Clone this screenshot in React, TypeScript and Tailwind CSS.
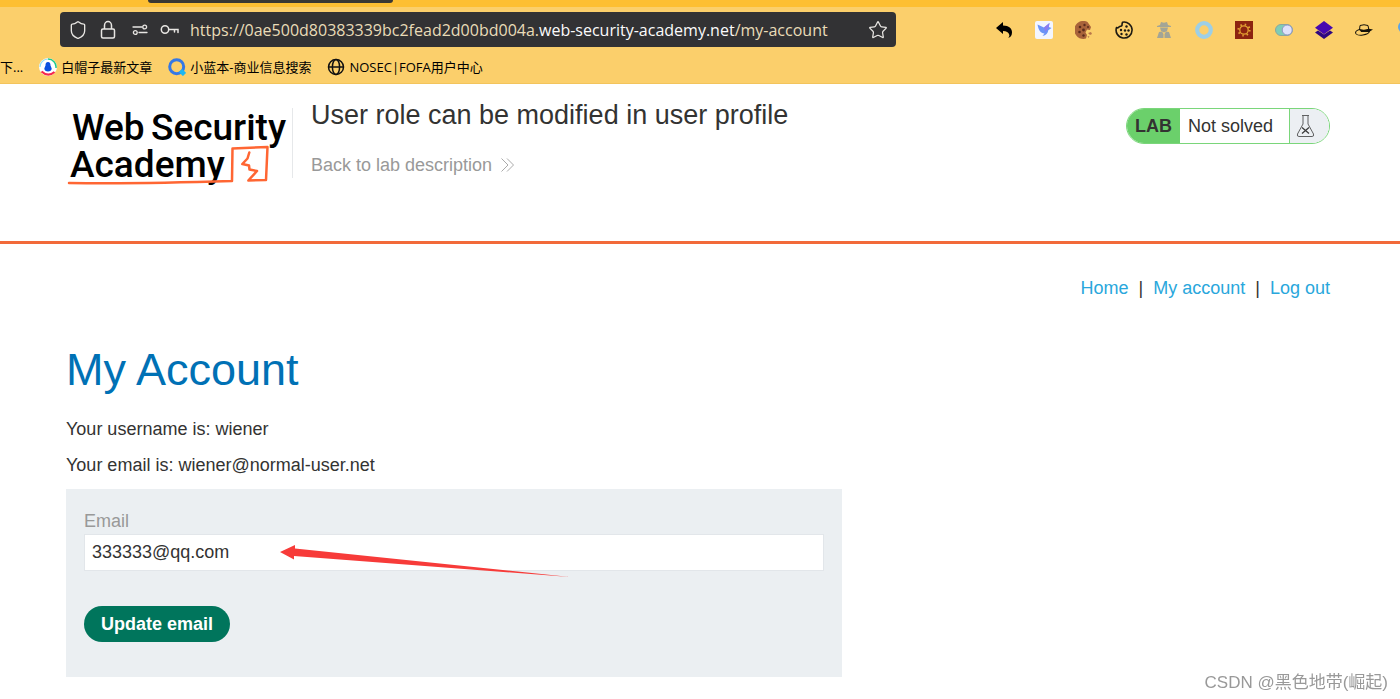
import React from 'react';
import { Star, Shield } from 'lucide-react';

const UI_FONT = "font-['Open_Sans','Noto_Sans_CJK_SC',sans-serif]";

const LockIcon = () => (
  <svg viewBox="0 0 16 20" className="h-5 w-4" fill="none" stroke="#e8e6e3" strokeWidth="1.500">
    <rect x="1.500" y="9" width="13" height="9" rx="1.500" />
    <path d="M4.500 9V5.500a3.500 4 0 0 1 7 0V9" />
  </svg>
);

const PermissionsIcon = () => (
  <svg viewBox="0 0 16 16" className="size-4" fill="none" stroke="#e8e6e3" strokeWidth="1.300" strokeLinecap="round">
    <path d="M1 5h9M7 10.500h8" />
    <circle cx="12.700" cy="5" r="1.900" />
    <circle cx="3.300" cy="10.500" r="1.900" />
  </svg>
);

const KeyIcon = () => (
  <svg viewBox="0 0 20 16" className="h-4 w-5" fill="none" stroke="#e8e6e3" strokeWidth="1.500" strokeLinecap="round">
    <circle cx="5" cy="7.500" r="3.700" />
    <path d="M9 7.500h9v3M14.500 7.500v2.500" />
  </svg>
);

const PaopaoIcon = () => (
  <svg viewBox="0 0 18 18" className="size-[18px]">
    <circle cx="9" cy="9" r="9" fill="#fff" />
    <path d="M9 1A8 8 0 0 1 17 10" fill="none" stroke="#20c98a" strokeWidth="1.500" />
    <path d="M1 9A8 8 0 0 1 9 1" fill="none" stroke="#8fdcf7" strokeWidth="1.200" />
    <path d="M2.500 13.500Q9 19.500 15.500 14" fill="none" stroke="#f5274f" strokeWidth="2.200" />
    <path d="M9 4c1.900 0 2.500 1.500 2.500 3.500l1.200 3c0 2-1.700 3-3.700 3s-3.700-1-3.700-3l1.200-3C6.500 5.500 7.100 4 9 4z" fill="#0b4fe0" />
  </svg>
);

const SearchQIcon = () => (
  <svg viewBox="0 0 18 18" className="size-[18px]">
    <circle cx="8.700" cy="8.700" r="7" fill="none" stroke="#3578e5" strokeWidth="3" />
    <path d="M12.500 12.500l4 4" stroke="#1bb8f2" strokeWidth="4.500" />
  </svg>
);

const GlobeIcon = () => (
  <svg viewBox="0 0 18 18" className="size-[18px]" fill="none" stroke="#111" strokeWidth="1.500">
    <circle cx="9" cy="9" r="7.500" />
    <ellipse cx="9" cy="9" rx="3.600" ry="7.500" />
    <path d="M1.500 9h15" />
  </svg>
);

const extensions = [
  {
    name: 'Undo',
    icon: (
      <path d="M1 7L8 1v3.500c6 0 9 3 9 7 0 3-1.500 5-4 5.500 1.200-1 1.700-2.200 1.200-3.500C13.500 11.500 11.500 10 8 10v3z" fill="#000" />
    ),
  },
  {
    name: 'Bird',
    icon: (
      <>
        <rect width="18" height="18" rx="2" fill="#f3f6ff" />
        <path d="M2.500 3.500l6.500 3L14.500 2l-.7 4L16.500 7l-3.200 2.200c-.3 3-2.300 5-5.800 5.800l2-2.500C5.500 12 3.500 9 2.500 3.500z" fill="#6b94f7" />
        <path d="M9 6.500L14.500 2l-.7 4-3.300 5z" fill="#8d7cf0" />
      </>
    ),
  },
  {
    name: 'Cookie editor',
    icon: (
      <>
        <path d="M12.500 1A9 9 0 1 0 11 17.500L12 14l-1.500-2.500 1.500-3 3 .5 1-3z" fill="#a9633a" />
        <g fill="#5a2c1c">
          <circle cx="5" cy="6" r="1.300" />
          <circle cx="9.500" cy="4" r="1.200" />
          <circle cx="4.500" cy="11" r="1.300" />
          <circle cx="8.500" cy="9" r="1.400" />
          <circle cx="8.500" cy="14.500" r="1.200" />
          <circle cx="13" cy="6" r="1" />
        </g>
        <path d="M13 12l3-1 1 2-2 1zM12.500 15l2 .5-1 1.500z" fill="#b9774a" />
      </>
    ),
  },
  {
    name: 'Cookies',
    icon: (
      <>
        <path d="M7.500 1.200A8 8 0 1 1 1.500 6.500Q3 7.500 4.500 5.500 7.500 5.500 7 3.200z" fill="none" stroke="#1d1a12" strokeWidth="1.600" strokeLinejoin="round" />
        <g fill="#1d1a12">
          <circle cx="6" cy="9" r="1.200" />
          <circle cx="11.500" cy="5.500" r="1.200" />
          <circle cx="10" cy="9.500" r="1.200" />
          <circle cx="6.500" cy="13" r="1.200" />
          <circle cx="13.500" cy="9.500" r="1.200" />
          <circle cx="11.500" cy="13.500" r="1.200" />
        </g>
      </>
    ),
  },
  {
    name: 'Spy',
    icon: (
      <g fill="#a3a596">
        <path d="M6 1l3 .8L12 1l1 3 3 1v1H2V5l3-1z" />
        <path d="M5 6.500h8L12 10l-3 1.500L6 10z" />
        <path d="M4 11l3-.5 1.500 2.500V17H2zM14 11l-3-.5L9.500 13V17H16z" />
      </g>
    ),
  },
  { name: 'Ring', icon: <circle cx="9" cy="9" r="6.800" fill="none" stroke="#9dcfe6" strokeWidth="4.200" /> },
  {
    name: 'Gear',
    icon: (
      <>
        <rect width="18" height="18" fill="#8d2410" />
        <circle cx="9" cy="9" r="4.200" fill="none" stroke="#e3a032" strokeWidth="1.300" />
        <circle cx="9" cy="9" r="5.600" fill="none" stroke="#e3a032" strokeWidth="2" strokeDasharray="1.500 2.900" />
      </>
    ),
  },
  {
    name: 'Proxy switch',
    icon: (
      <>
        <rect x=".5" y="3.500" width="17" height="11" rx="5.500" fill="#7fcdb6" stroke="#8aa79f" />
        <circle cx="12.200" cy="9" r="5" fill="#dfe2fb" stroke="#9296c4" />
      </>
    ),
  },
  {
    name: 'Layers',
    icon: (
      <>
        <path d="M0 11.500l3-2 6 4 6-4 3 2L9 18z" fill="#2f0880" />
        <path d="M9 0l9 6.800-9 6.500L0 6.800z" fill="#4608b0" />
      </>
    ),
  },
  {
    name: 'Hat',
    icon: (
      <>
        <ellipse cx="7.500" cy="11" rx="7" ry="3" transform="rotate(-8 7.500 11)" fill="none" stroke="#14110a" strokeWidth="1.100" />
        <path d="M4.500 9L5 4.500q4-1.500 8 0l.8 4q-4.500 2-9.300.5z" fill="#fbcf6b" stroke="#14110a" />
        <path d="M4.500 8q4.500 1.500 9.200-.3L18 8.500l-4 2.500H6z" fill="#14110a" />
      </>
    ),
  },
  { name: 'More', icon: <circle cx="9" cy="6" r="6" fill="#5ba4e8" /> },
];

const AcademyLogo = () => (
  <svg viewBox="0 -8 225 92" className="h-[92px] w-[225px] shrink-0" role="img" aria-label="Web Security Academy">
    <g className="font-['Roboto',sans-serif] text-[37px] font-medium" fill="#000">
      <text x="5" y="33">Web</text>
      <text x="84" y="33">Security</text>
      <text x="3" y="70">Academy</text>
    </g>
    <g fill="none" stroke="#ff6633" strokeWidth="2.500" strokeLinejoin="round" strokeLinecap="round">
      <path d="M2 76Q70 77 165 74L165.500 41.500l35-1.500-1.500 33-17.700.5L190 64l-7.500-1.500-.5-4-6.700-1.500 5.200-5.500 1.800-6" />
    </g>
  </svg>
);

const BrowserChrome = () => (
  <div className={`overflow-hidden bg-[#fbcf6b] text-black ${UI_FONT}`}>
    <div className="h-[7px] bg-[#fdbf32]">
      <div className="ml-[148px] h-[3px] w-[245px] rounded-b-sm bg-[#3a3833]" />
    </div>
    <div className="flex items-center pt-[5px]">
      <div className="ml-[60px] mr-[88px] flex h-[35px] min-w-0 flex-1 items-center rounded bg-[#323234] px-2 text-[#e8e6e3]">
        <Shield className="size-5 shrink-0" strokeWidth={1.6} />
        <span className="ml-3 shrink-0"><LockIcon /></span>
        <span className="ml-4 shrink-0"><PermissionsIcon /></span>
        <span className="ml-3 shrink-0"><KeyIcon /></span>
        <div className="ml-[10px] min-w-0 flex-1 truncate text-base text-[#e9dcb8]">
          https://0ae500d80383339bc2fead2d00bd004a.<span className="text-[#fbfbfb]">web-security-academy.net</span>/my-account
        </div>
        <button aria-label="Bookmark this page"><Star className="size-5" strokeWidth={1.5} /></button>
      </div>
      <div className="-mr-6 flex shrink-0">
        {extensions.map((ext) => (
          <button key={ext.name} aria-label={ext.name} className="flex w-10 justify-center">
            <svg viewBox="0 0 18 18" className="size-[18px]">{ext.icon}</svg>
          </button>
        ))}
      </div>
    </div>
    <nav className="flex h-[37px] items-center gap-4 border-b border-[#f3c45c] pt-1 text-[13px] whitespace-nowrap">
      <a href="#more">下...</a>
      <a href="#news" className="flex items-center gap-1"><PaopaoIcon />白帽子最新文章</a>
      <a href="#search" className="flex items-center gap-1"><SearchQIcon />小蓝本-商业信息搜索</a>
      <a href="#fofa" className="flex items-center gap-1"><GlobeIcon />NOSEC|FOFA用户中心</a>
    </nav>
  </div>
);

const LabStatus = () => (
  <div className="flex h-9 items-stretch overflow-hidden rounded-full border border-[#7ad67a]">
    <span className="flex items-center bg-[#6bd06b] px-2 font-bold">LAB</span>
    <span className="flex items-center pl-2 pr-4">Not solved</span>
    <span className="flex w-10 items-center border-l border-[#7ad67a] bg-[#eceff3] pl-1.5">
      <svg viewBox="0 0 20 24" className="h-6 w-5" fill="none" stroke="#3c3c3c">
        <path d="M6 1.500h7M7 2v8L1.500 20q-.8 2.500 1.500 2.500h13q2.300 0 1.500-2.500L12 10V2" strokeWidth=".8" />
        <path d="M6 13.500l7 6M13 13.500l-7 6" strokeWidth="1.300" />
      </svg>
    </span>
  </div>
);

const App: React.FC = () => {
  return (
    <div className="min-h-screen bg-white font-['Liberation_Sans',Arial,sans-serif] text-lg text-[#333332]">
      <BrowserChrome />

      {/* Lab header */}
      <header className="flex h-[160px] items-start border-b-3 border-[#f26a3a] pl-[67px] pr-[70px] pt-[15px]">
        <AcademyLogo />
        <div className="mt-[9px] h-[70px] border-l border-[#e6e8ea]" />
        <div className="ml-[18px] flex-1">
          <h2 className="text-[27px] leading-8">User role can be modified in user profile</h2>
          <a href="#lab" className="mt-[22px] flex items-center gap-2 leading-6 text-[#999]">
            Back to lab description
            <svg viewBox="0 0 16 16" className="size-4" fill="none" stroke="#aaa">
              <path d="M1.500 1.500L8 8l-6.500 6.500M7 1.500L13.500 8 7 14.500" />
            </svg>
          </a>
        </div>
        <div className="mt-[9px]"><LabStatus /></div>
      </header>

      <main className="pl-[66px] pr-[70px] pt-8">
        <nav className="flex justify-end gap-[10px] leading-6">
          <a href="#home" className="text-[#29a7dc]">Home</a>
          <span>|</span>
          <a href="#account" className="text-[#29a7dc]">My account</a>
          <span>|</span>
          <a href="#logout" className="text-[#29a7dc]">Log out</a>
        </nav>

        <h1 className="mt-[46px] text-[45px] leading-[48px] text-[#0071b5]">My Account</h1>
        <p className="mt-[23px] leading-6">Your username is: wiener</p>
        <p className="mt-3 leading-6">Your email is: wiener@normal-user.net</p>

        <form className="relative mt-3 max-w-[776px] bg-[#ebeff2] px-[18px] pb-[35px] pt-5" onSubmit={(e) => e.preventDefault()}>
          <label htmlFor="email" className="block leading-6 text-[#999]">Email</label>
          <input
            id="email"
            type="email"
            defaultValue="333333@qq.com"
            className="mt-px block h-[37px] w-full border border-[#e2e6ea] bg-white px-[7px] outline-none"
          />
          <button type="submit" className="mt-[35px] h-9 rounded-full bg-[#00755c] px-[17px] font-bold text-white">
            Update email
          </button>
          {/* Arrow pointing at the new address */}
          <svg viewBox="0 0 292 36" className="pointer-events-none absolute left-[214px] top-[54px] h-9 w-[292px]">
            <path d="M0 9L15 2v3.500L290 34 14 13v3.500z" fill="#f73b39" />
          </svg>
        </form>
      </main>

      <div className="fixed bottom-1 right-3 font-['Liberation_Sans','Noto_Sans_CJK_SC',sans-serif] text-[17px] leading-6 text-[#999]">
        CSDN @黑色地带(崛起)
      </div>
    </div>
  );
};

export default App;
